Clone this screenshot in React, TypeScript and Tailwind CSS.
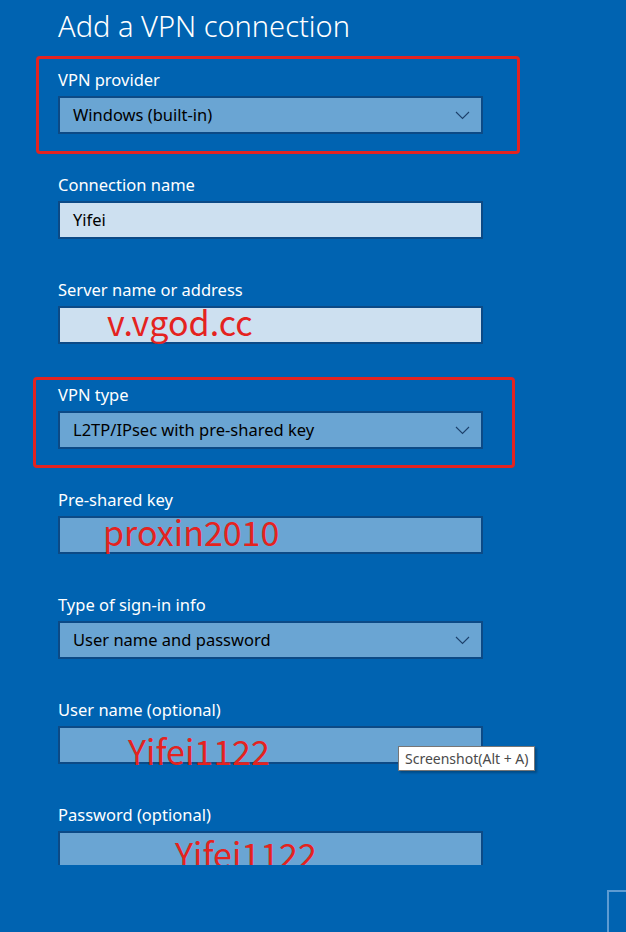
import React from "react";

const Chevron = () => (
  <svg width="15" height="9" viewBox="0 0 15 9" className="shrink-0">
    <polyline points="1,1 7.5,7.5 14,1" fill="none" stroke="#1d416b" strokeWidth="1.1" />
  </svg>
);

type FieldProps = {
  label: string;
  value?: string;
  light?: boolean;
  dropdown?: boolean;
  overlay?: React.ReactNode;
  first?: boolean;
};

const Field = ({ label, value, light, dropdown, overlay, first }: FieldProps) => (
  <div className={first ? "mt-[25px]" : "mt-[40px]"}>
    <div className="text-[16.5px] leading-[22px] text-white mb-[5px]">{label}</div>
    <div
      className={
        "relative w-[425px] h-[38px] border-2 border-[#0c4a86] flex items-center justify-between pl-[13px] pr-[11px] text-[16.5px] text-black " +
        (light ? "bg-[#cde0f0]" : "bg-[#6aa5d3]")
      }
    >
      <span>{value}</span>
      {dropdown && <Chevron />}
      {overlay}
    </div>
  </div>
);

const RedText = ({ text, left, top }: { text: string; left: number; top: number }) => (
  <span
    className="absolute text-[34px] leading-none text-[#e4231f] font-['Noto_Sans_CJK_SC','Noto_Sans',sans-serif] whitespace-nowrap"
    style={{ left, top }}
  >
    {text}
  </span>
);

export default function App() {
  return (
    <div className="relative w-[626px] h-[932px] bg-[#0063b1] overflow-hidden font-['Noto_Sans','Open_Sans',sans-serif]">
      <div className="h-[865px] overflow-hidden pl-[58px] pt-[7px]">
        <h1 className="text-[29px] leading-[37px] text-white font-light">Add a VPN connection</h1>
        <Field first label="VPN provider" value="Windows (built-in)" dropdown />
        <Field label="Connection name" value="Yifei" light />
        <Field label="Server name or address" light overlay={<RedText text="v.vgod.cc" left={47} top={-3} />} />
        <Field label="VPN type" value="L2TP/IPsec with pre-shared key" dropdown />
        <Field label="Pre-shared key" overlay={<RedText text="proxin2010" left={43} top={-3} />} />
        <Field label="Type of sign-in info" value="User name and password" dropdown />
        <Field label="User name (optional)" overlay={<RedText text="Yifei1122" left={68} top={6} />} />
        <Field label="Password (optional)" overlay={<RedText text="Yifei1122" left={115} top={4} />} />
      </div>
      <div className="flex justify-end pt-[25px]">
        <div className="w-[19px] h-[42px] border-l-2 border-t-2 border-[#5d9bd2]" />
      </div>

      {/* red annotation boxes */}
      <div className="absolute left-[36px] top-[56px] w-[484px] h-[98px] border-[3px] border-[#e4231f] rounded-[4px]" />
      <div className="absolute left-[33px] top-[377px] w-[482px] h-[91px] border-[3px] border-[#e4231f] rounded-[4px]" />

      {/* tooltip */}
      <div className="absolute left-[398px] top-[746px] h-[25px] px-[6px] flex items-center bg-white border border-[#767676] shadow-[2px_2px_2px_rgba(0,0,0,0.25)] text-[14px] text-[#4a4a4a] whitespace-nowrap">
        Screenshot(Alt + A)
      </div>
    </div>
  );
}
